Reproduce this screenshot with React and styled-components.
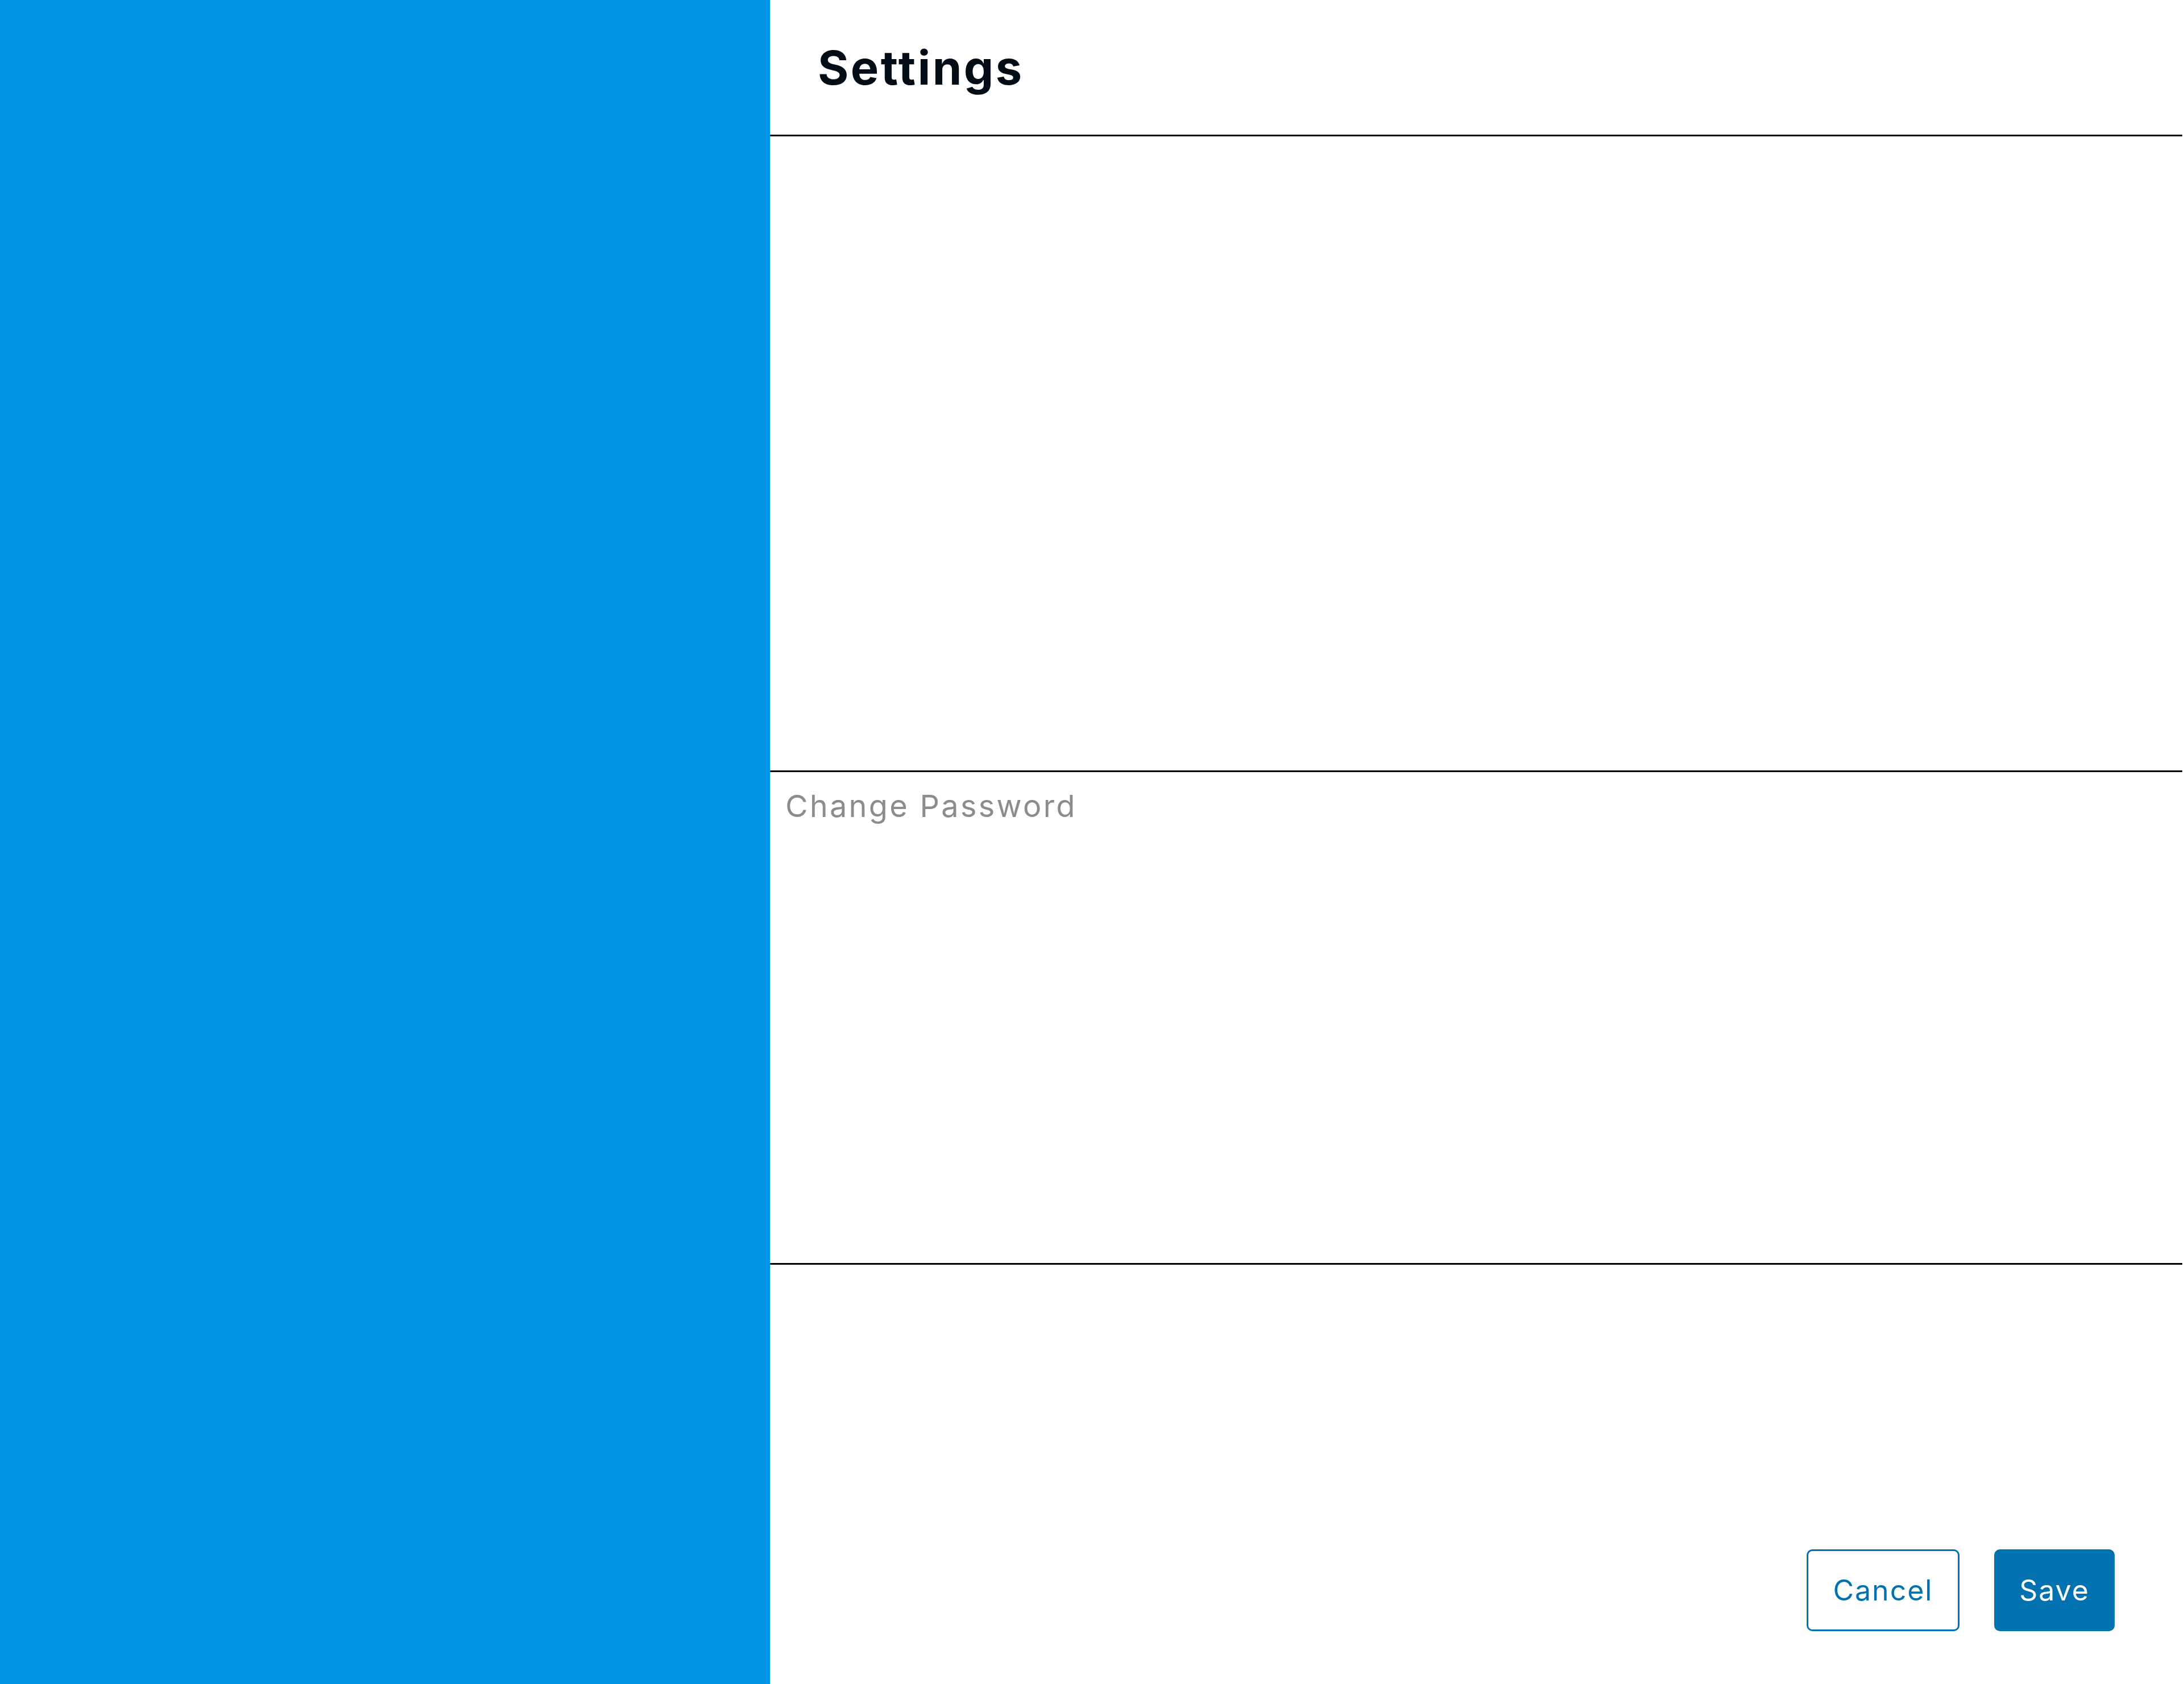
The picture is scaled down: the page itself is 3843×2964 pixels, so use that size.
import React from "react";
import styled, { createGlobalStyle } from "styled-components";

const Global = createGlobalStyle`
  html, body { margin: 0; padding: 0; height: 100%; background: #ffffff; }
  #root { height: 100%; }
  * { box-sizing: border-box; }
`;

const Page = styled.div`
  display: flex;
  height: 100vh;
  width: 100%;
  overflow: hidden;
`;

const Sidebar = styled.aside`
  flex: 0 0 1355px;
  background: #0096e6;
`;

const Main = styled.main`
  flex: 1;
  display: flex;
  flex-direction: column;
  padding-right: 3px;
  min-width: 0;
`;

const Header = styled.header`
  flex: 0 0 240px;
  border-bottom: 3px solid #000000;
  padding: 0 0 0 84px;
  display: flex;
  align-items: flex-start;
`;

const Title = styled.h1`
  margin: 0;
  padding-top: 78px;
  font-family: "Inter", "Liberation Sans", sans-serif;
  font-weight: 700;
  font-size: 83px;
  line-height: 1;
  color: #020d17;
  letter-spacing: 3.5px;
`;

const Section = styled.section`
  flex: 0 0 ${(p) => p.$height}px;
  border-bottom: ${(p) => (p.$divider ? "3px solid #000000" : "none")};
  padding: ${(p) => p.$padding || "0"};
`;

const SectionLabel = styled.div`
  font-family: "Inter", "Liberation Sans", sans-serif;
  font-weight: 400;
  font-size: 54px;
  line-height: 1;
  color: #8c8c8c;
  letter-spacing: 3.3px;
`;

const Footer = styled.footer`
  flex: 1;
  display: flex;
  justify-content: flex-end;
  align-items: flex-end;
  gap: 61px;
  padding: 0 119px 93px 0;
`;

const Button = styled.button`
  height: 144px;
  width: ${(p) => p.$width}px;
  border-radius: 10px;
  border: 3px solid #0271b0;
  background: ${(p) => (p.$primary ? "#0271b0" : "#ffffff")};
  color: ${(p) => (p.$primary ? "#ffffff" : "#0271b0")};
  font-family: "Inter", "Liberation Sans", sans-serif;
  font-size: 50px;
  font-weight: 400;
  letter-spacing: 2px;
  display: flex;
  align-items: center;
  justify-content: center;
  padding: 0;
  cursor: pointer;
`;

export default function App() {
  return (
    <>
      <Global />
      <Page>
        <Sidebar />
        <Main>
          <Header>
            <Title>Settings</Title>
          </Header>
          <Section $height={1119} $divider />
          <Section $height={867} $divider $padding="33px 0 0 27px">
            <SectionLabel>Change Password</SectionLabel>
          </Section>
          <Footer>
            <Button $width={269}>Cancel</Button>
            <Button $width={212} $primary>Save</Button>
          </Footer>
        </Main>
      </Page>
    </>
  );
}
